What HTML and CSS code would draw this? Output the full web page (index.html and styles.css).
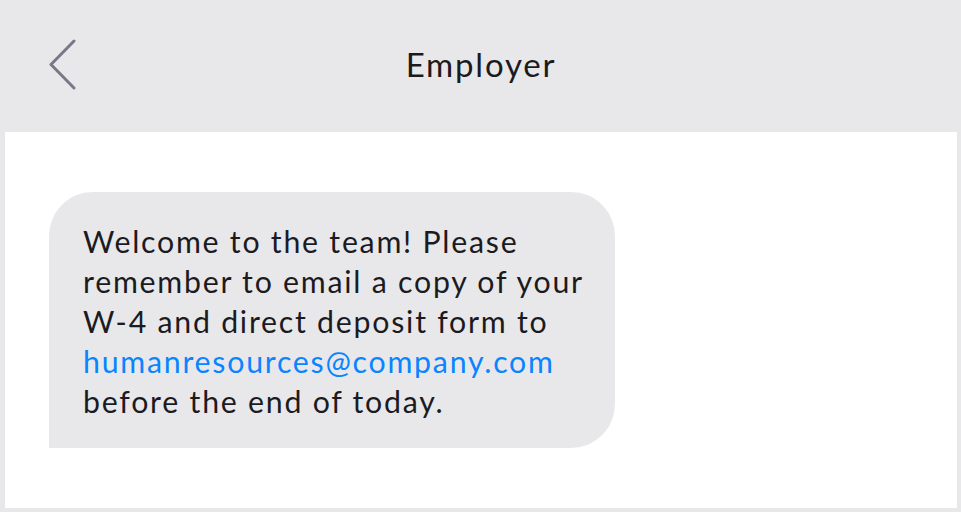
FILE: index.html
```html
<!DOCTYPE html>
<html>
<head>
    <title>Employer</title>
    <link rel="stylesheet" href="styles.css">
</head>
<body>
    <div class="app">
        <div class="top-bar">
            <button class="back-button" aria-label="Back">
                <svg width="28" height="52" viewBox="0 0 28 52">
                    <polyline points="25,2 2,25.5 25,49" fill="none" stroke="#7c7787" stroke-width="3" stroke-linecap="round" stroke-linejoin="round"/>
                </svg>
            </button>
            <div class="top-title">Employer</div>
        </div>

        <div class="thread">
            <div class="bubble">
                Welcome to the team! Please remember to email a copy of your W&#8209;4 and direct deposit form to
                <a class="bubble-link" href="#">humanresources@company.com</a>
                before the end of today.
            </div>
        </div>
    </div>
</body>
</html>
```

FILE: styles.css
```css
html, body {
    height: 100%;
}

body {
    margin: 0;
    background-color: #e8e8eb;
    font-family: Lato, "Noto Sans", sans-serif;
    color: #1b1b1f;
    overflow: hidden;
}

.app {
    display: flex;
    flex-direction: column;
    height: 100%;
    padding: 0 4px 4px 5px;
    box-sizing: border-box;
}

.top-bar {
    position: relative;
    height: 132px;
    flex-shrink: 0;
    display: flex;
    align-items: center;
    justify-content: center;
}

.back-button {
    position: absolute;
    left: 44px;
    top: 39px;
    padding: 0;
    margin: 0;
    border: none;
    background: none;
    line-height: 0;
    cursor: pointer;
}

.top-title {
    font-size: 33px;
    letter-spacing: 1.8px;
    margin-left: 0;
    margin-top: -4px;
}

.thread {
    flex: 1;
    background-color: #fff;
    padding: 60px 0 0 44px;
}

.bubble {
    width: 502px;
    background-color: #e8e8eb;
    border-radius: 44px 44px 44px 0;
    padding: 29px 30px 27px 34px;
    font-size: 30.3px;
    line-height: 40px;
    letter-spacing: 1.75px;
}

.bubble-link {
    color: #0a84ff;
    text-decoration: none;
}
```
